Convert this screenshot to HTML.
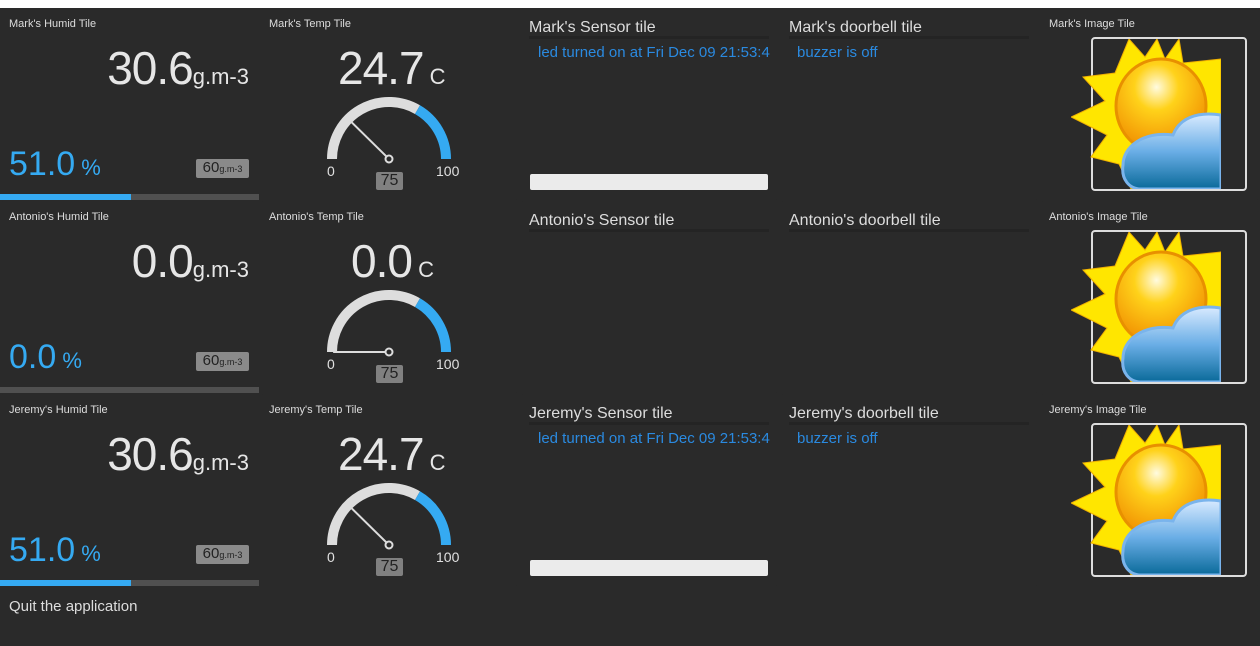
<!DOCTYPE html>
<html><head><meta charset="utf-8"><style>
*{margin:0;padding:0;box-sizing:border-box}
body{width:1260px;height:646px;background:#2a2a2a;position:relative;overflow:hidden;font-family:"Liberation Sans",sans-serif;color:#e0e0e0}
.top{position:absolute;left:0;top:0;width:1260px;height:8px;background:#fff}
.t{position:absolute;background:#2a2a2a;border-radius:4px}
.a{position:absolute;white-space:nowrap}
.ttl{font-size:11px;color:#ddd}
.big{font-size:46px;color:#e6e6e6;letter-spacing:-1px}
.big small{font-size:22px;letter-spacing:0}
.hum{font-size:34px;color:#35aaf2}
.hum small{font-size:22px}
.badge{background:#8a8a8a;color:#222;border-radius:2px;font-size:15px;text-align:center;line-height:18px}
.stt{font-size:16px;color:#ddd}
.blue{font-size:15px;color:#2a8ae0}
</style></head><body>
<div class="top"></div>
<div id="root"></div>
<div class="a" style="left:9px;top:598px;font-size:15px;color:#ddd">Quit the application</div>
<script>
var rows=[["Mark",8,"30.6","51.0","24.7",1,135.5],["Antonio",201,"0.0","0.0","0.0",0,180],["Jeremy",394,"30.6","51.0","24.7",1,135.5]];
var h="";
function sun(){return '<svg width="150" height="150" viewBox="0 0 150 150"><defs><radialGradient id="g1" cx="45%" cy="30%" r="70%"><stop offset="0" stop-color="#fffbe0"/><stop offset="0.35" stop-color="#ffd21a"/><stop offset="1" stop-color="#f08c00"/></radialGradient><linearGradient id="g2" x1="0" y1="0" x2="0" y2="1"><stop offset="0" stop-color="#d8eaff"/><stop offset="0.5" stop-color="#6aaee6"/><stop offset="1" stop-color="#0a6a9a"/></linearGradient></defs><polygon points="58,0 74,18 86,0 94,20 108,0 112,24 150,20 150,150 60,150 48,125 20,118 36,96 0,78 34,62 12,38 44,34" fill="#ffe600" stroke="#f0b000"/><ellipse cx="90" cy="67" rx="45" ry="47" fill="url(#g1)" stroke="#e89000" stroke-width="3"/><path d="M150,76 C125,72 108,80 102,96 C72,92 52,108 52,126 C50,140 58,150 70,150 L150,150Z" fill="url(#g2)" stroke="#7ab4ec" stroke-width="3"/></svg>';}
rows.forEach(function(r){
var y=r[1],n=r[0],on=r[5];
h+='<div class="t" style="left:0;top:'+y+'px;width:259px;height:192px"></div>';
h+='<div class="a ttl" style="left:9px;top:'+(y+10)+'px">'+n+'\'s Humid Tile</div>';
h+='<div class="a big" style="right:1011px;top:'+(y+33)+'px">'+r[2]+'<small>g.m-3</small></div>';
h+='<div class="a hum" style="left:9px;top:'+(y+137)+'px">'+r[3]+'<small> %</small></div>';
h+='<div class="a badge" style="left:196px;top:'+(y+151)+'px;width:53px">60<span style="font-size:9px">g.m-3</span></div>';
h+='<div class="a" style="left:0;top:'+(y+186)+'px;width:259px;height:6px;background:#505050"></div>';
if(on)h+='<div class="a" style="left:0;top:'+(y+186)+'px;width:131px;height:6px;background:#35aaf2"></div>';
h+='<div class="t" style="left:260px;top:'+y+'px;width:259px;height:192px"></div>';
h+='<div class="a ttl" style="left:269px;top:'+(y+10)+'px">'+n+'\'s Temp Tile</div>';
h+='<div class="a big" style="left:'+(on?338:351)+'px;top:'+(y+33)+'px">'+r[4]+'<small> C</small></div>';
var cx=389,cy=y+151,R=57,ang=r[6]*Math.PI/180;
var nx=cx+R*Math.cos(ang)*0.98,ny=cy-R*Math.sin(ang)*0.98;
var bx=cx+R*Math.cos(Math.PI/3),by=cy-R*Math.sin(Math.PI/3);
h+='<svg class="a" style="left:0;top:0" width="1260" height="646"><path d="M'+(cx-R)+','+cy+' A'+R+','+R+' 0 0 1 '+bx+','+by+'" fill="none" stroke="#ddd" stroke-width="10"/><path d="M'+bx+','+by+' A'+R+','+R+' 0 0 1 '+(cx+R)+','+cy+'" fill="none" stroke="#35aaf2" stroke-width="10"/><line x1="'+cx+'" y1="'+cy+'" x2="'+nx+'" y2="'+ny+'" stroke="#ddd" stroke-width="2"/><circle cx="'+cx+'" cy="'+cy+'" r="3.5" fill="#2a2a2a" stroke="#ddd" stroke-width="2"/></svg>';
h+='<div class="a" style="left:327px;top:'+(y+155)+'px;font-size:14px">0</div>';
h+='<div class="a" style="left:436px;top:'+(y+155)+'px;font-size:14px">100</div>';
h+='<div class="a badge" style="left:376px;top:'+(y+164)+'px;width:27px;height:18px;font-size:16px;background:#808080">75</div>';
h+='<div class="t" style="left:520px;top:'+y+'px;width:259px;height:192px"></div>';
h+='<div class="a stt" style="left:529px;top:'+(y+11)+'px">'+n+'\'s Sensor tile</div>';
h+='<div class="a" style="left:529px;top:'+(y+28)+'px;width:240px;height:3px;background:#242424"></div>';
if(on){h+='<div class="a blue" style="left:538px;top:'+(y+36)+'px;width:232px;overflow:hidden">led turned on at Fri Dec 09 21:53:46</div>';
h+='<div class="a" style="left:530px;top:'+(y+166)+'px;width:238px;height:16px;background:#ebebeb;border-radius:2px"></div>';}
h+='<div class="t" style="left:780px;top:'+y+'px;width:259px;height:192px"></div>';
h+='<div class="a stt" style="left:789px;top:'+(y+11)+'px">'+n+'\'s doorbell tile</div>';
h+='<div class="a" style="left:789px;top:'+(y+28)+'px;width:240px;height:3px;background:#242424"></div>';
if(on)h+='<div class="a blue" style="left:797px;top:'+(y+36)+'px">buzzer is off</div>';
h+='<div class="t" style="left:1040px;top:'+y+'px;width:220px;height:192px"></div>';
h+='<div class="a ttl" style="left:1049px;top:'+(y+10)+'px">'+n+'\'s Image Tile</div>';
h+='<div class="a" style="left:1091px;top:'+(y+29)+'px;width:156px;height:154px;border:2px solid #ddd;border-radius:4px"></div>';
h+='<div class="a" style="left:1071px;top:'+(y+31)+'px;width:150px;height:150px;overflow:hidden">'+sun()+'</div>';
});
document.getElementById("root").innerHTML=h;
</script>
</body></html>
